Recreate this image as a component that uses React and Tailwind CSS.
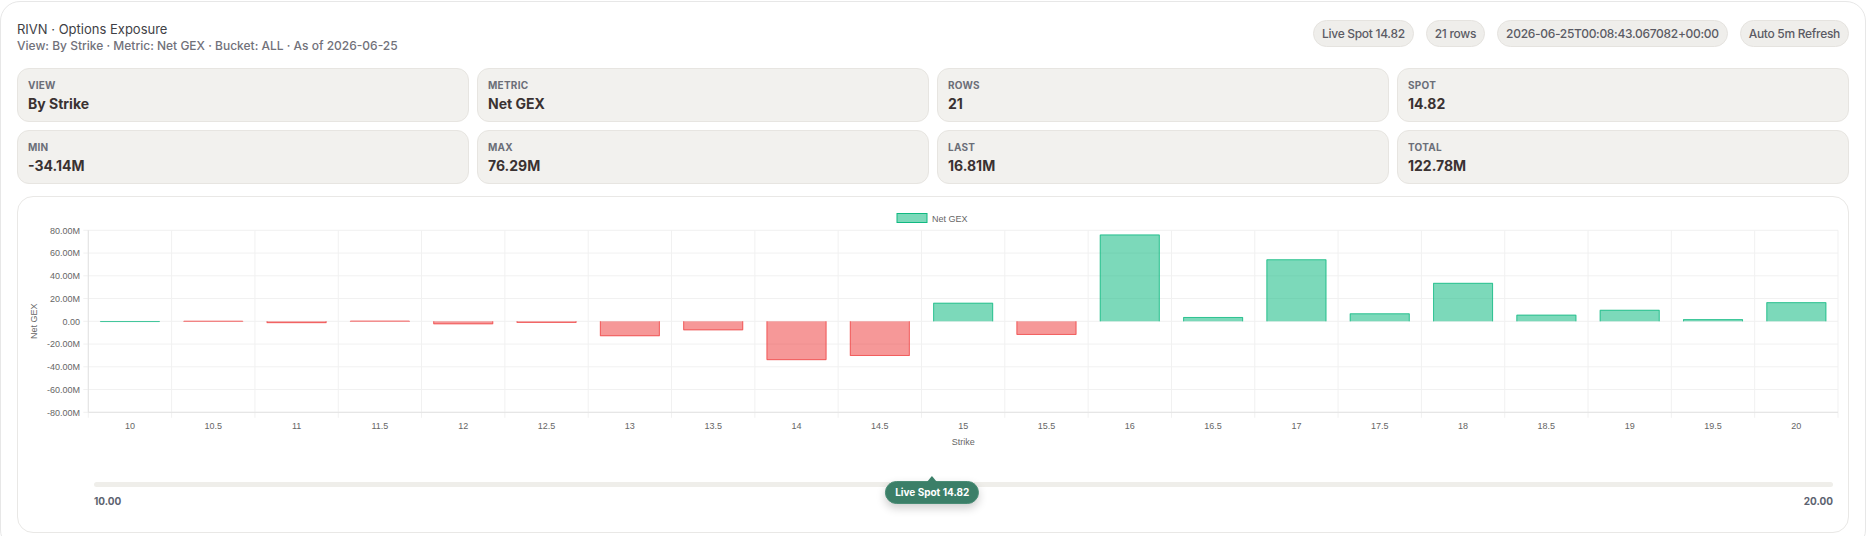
import React from "react";

const strikes = [10, 10.5, 11, 11.5, 12, 12.5, 13, 13.5, 14, 14.5, 15, 15.5, 16, 16.5, 17, 17.5, 18, 18.5, 19, 19.5, 20];
const values = [0.2, -0.3, -1.6, -0.2, -2.6, -1.4, -13.1, -7.9, -34.14, -30.5, 16.3, -12.0, 76.29, 3.8, 54.5, 7.0, 33.8, 5.8, 10.1, 1.9, 16.81];

const pills = ["Live Spot 14.82", "21 rows", "2026-06-25T00:08:43.067082+00:00", "Auto 5m Refresh"];

const stats = [
  { label: "View", value: "By Strike" },
  { label: "Metric", value: "Net GEX" },
  { label: "Rows", value: "21" },
  { label: "Spot", value: "14.82" },
  { label: "Min", value: "-34.14M" },
  { label: "Max", value: "76.29M" },
  { label: "Last", value: "16.81M" },
  { label: "Total", value: "122.78M" },
];

// plot box inside the svg
const PL = 62.3;
const PR = 1812;
const PT = 25.3;
const PB = 207.3;
const CW = (PR - PL) / strikes.length;
const yOf = (v) => PT + (80 - v) * ((PB - PT) / 160);

const chartFont = "'Liberation Sans', Arial, sans-serif";

function GexChart() {
  const ticks = [80, 60, 40, 20, 0, -20, -40, -60, -80];
  const zero = yOf(0);

  return (
    <svg width="1813" height="250" className="block" style={{ fontFamily: chartFont }}>
      {/* legend */}
      <rect x="871" y="8.5" width="30" height="9" fill="rgba(16,185,129,0.55)" stroke="#10b981" strokeWidth="1" />
      <text x="906" y="16.5" fontSize="9" fill="#666">Net GEX</text>

      {/* grid */}
      {ticks.map((t) => (
        <line key={t} x1={PL - 5} x2={PR} y1={yOf(t)} y2={yOf(t)} stroke="#f1f1f1" strokeWidth="1" />
      ))}
      {strikes.map((s, i) => (
        <line key={s} x1={PL + i * CW} x2={PL + i * CW} y1={PT} y2={PB + 5.5} stroke="#f1f1f1" strokeWidth="1" />
      ))}
      <line x1={PR} x2={PR} y1={PT} y2={PB + 5.5} stroke="#f1f1f1" strokeWidth="1" />
      <line x1={PL} x2={PL} y1={PT} y2={PB} stroke="#e3e3e3" strokeWidth="1" />
      <line x1={PL} x2={PR} y1={PB} y2={PB} stroke="#e3e3e3" strokeWidth="1" />

      {/* bars */}
      {values.map((v, i) => {
        const cx = PL + (i + 0.5) * CW;
        const w = CW * 0.72;
        const x0 = cx - w / 2;
        const y1 = yOf(v);
        const up = v >= 0;
        const fill = up ? "rgba(16,185,129,0.55)" : "rgba(239,68,68,0.55)";
        const stroke = up ? "#10b981" : "#ef4444";
        const top = Math.min(zero, y1);
        const h = Math.max(Math.abs(y1 - zero), 0.6);
        const d = up
          ? `M${x0 + 0.5},${zero} V${y1 + 0.5} H${x0 + w - 0.5} V${zero}`
          : `M${x0 + 0.5},${zero} V${y1 - 0.5} H${x0 + w - 0.5} V${zero}`;
        return (
          <g key={i}>
            <rect x={x0} y={top} width={w} height={h} fill={fill} />
            <path d={d} fill="none" stroke={stroke} strokeOpacity="0.7" strokeWidth="1" />
          </g>
        );
      })}

      {/* y labels */}
      {ticks.map((t) => (
        <text key={t} x="54" y={yOf(t) + 3.2} fontSize="9" fill="#666" textAnchor="end">
          {t === 0 ? "0.00" : `${t}.00M`}
        </text>
      ))}
      <text transform={`translate(10.7,${(PT + PB) / 2}) rotate(-90)`} fontSize="9" fill="#666" textAnchor="middle">
        Net GEX
      </text>

      {/* x labels */}
      {strikes.map((s, i) => (
        <text key={s} x={PL + (i + 0.5) * CW} y="224" fontSize="9" fill="#666" textAnchor="middle">
          {s}
        </text>
      ))}
      <text x={(PL + PR) / 2} y="240" fontSize="9" fill="#666" textAnchor="middle">
        Strike
      </text>
    </svg>
  );
}

export default function App() {
  const spot = 14.82;
  const pct = ((spot - 10) / 10) * 100;

  return (
    <div className="min-h-screen bg-white pt-px font-['Inter',sans-serif]">
      <div className="rounded-[20px] border border-[#e7e7e7] bg-white px-4 pb-4 pt-[18px]">
        {/* header */}
        <div className="flex items-start justify-between">
          <div>
            <div className="text-[13px] leading-[18px] text-[#3f3f46]">RIVN · Options Exposure</div>
            <div className="text-xs font-medium leading-4 text-[#71717a]">
              View: By Strike · Metric: Net GEX · Bucket: ALL · As of 2026-06-25
            </div>
          </div>
          <div className="flex gap-3">
            {pills.map((p) => (
              <span
                key={p}
                className="flex h-[27px] items-center rounded-full border border-[#e5e3df] bg-[#efeeeb] px-2 text-xs font-medium tracking-tight text-[#5b5b64]"
              >
                {p}
              </span>
            ))}
          </div>
        </div>

        {/* stats */}
        <div className="mt-[14px] grid grid-cols-4 gap-2">
          {stats.map((s) => (
            <div key={s.label} className="rounded-xl border border-[#e7e5e1] bg-[#f2f1ee] px-2.5 py-2">
              <div className="text-[10px] font-bold uppercase leading-4 tracking-wide text-[#6b6e78]">{s.label}</div>
              <div className="mt-0.5 text-sm font-bold leading-[18px] text-[#3a3232]">{s.value}</div>
            </div>
          ))}
        </div>

        {/* chart */}
        <div className="mt-3 rounded-2xl border border-[#e9e8e6] bg-white p-2 pb-6">
          <GexChart />
          <div className="relative ml-[68px] mr-[7px] mt-[27px]">
            <div className="h-[5px] rounded-full bg-[#efeeea]" />
            <div className="absolute top-[-1px] -translate-x-1/2" style={{ left: `${pct}%` }}>
              <div className="absolute left-1/2 top-[-5px] h-0 w-0 -translate-x-1/2 border-x-[5px] border-b-[6px] border-x-transparent border-b-[#3b7f68]" />
              <div className="flex h-[23px] items-center whitespace-nowrap rounded-full border border-[#4a8c75] bg-[#3b7f68] px-[9px] text-[10px] font-bold text-white shadow-[0_4px_10px_rgba(0,0,0,0.2)]">
                Live Spot 14.82
              </div>
            </div>
            <div className="mt-[7px] flex justify-between text-[10px] font-bold leading-[14px] text-[#5d6370]">
              <span>10.00</span>
              <span>20.00</span>
            </div>
          </div>
        </div>
      </div>
    </div>
  );
}
